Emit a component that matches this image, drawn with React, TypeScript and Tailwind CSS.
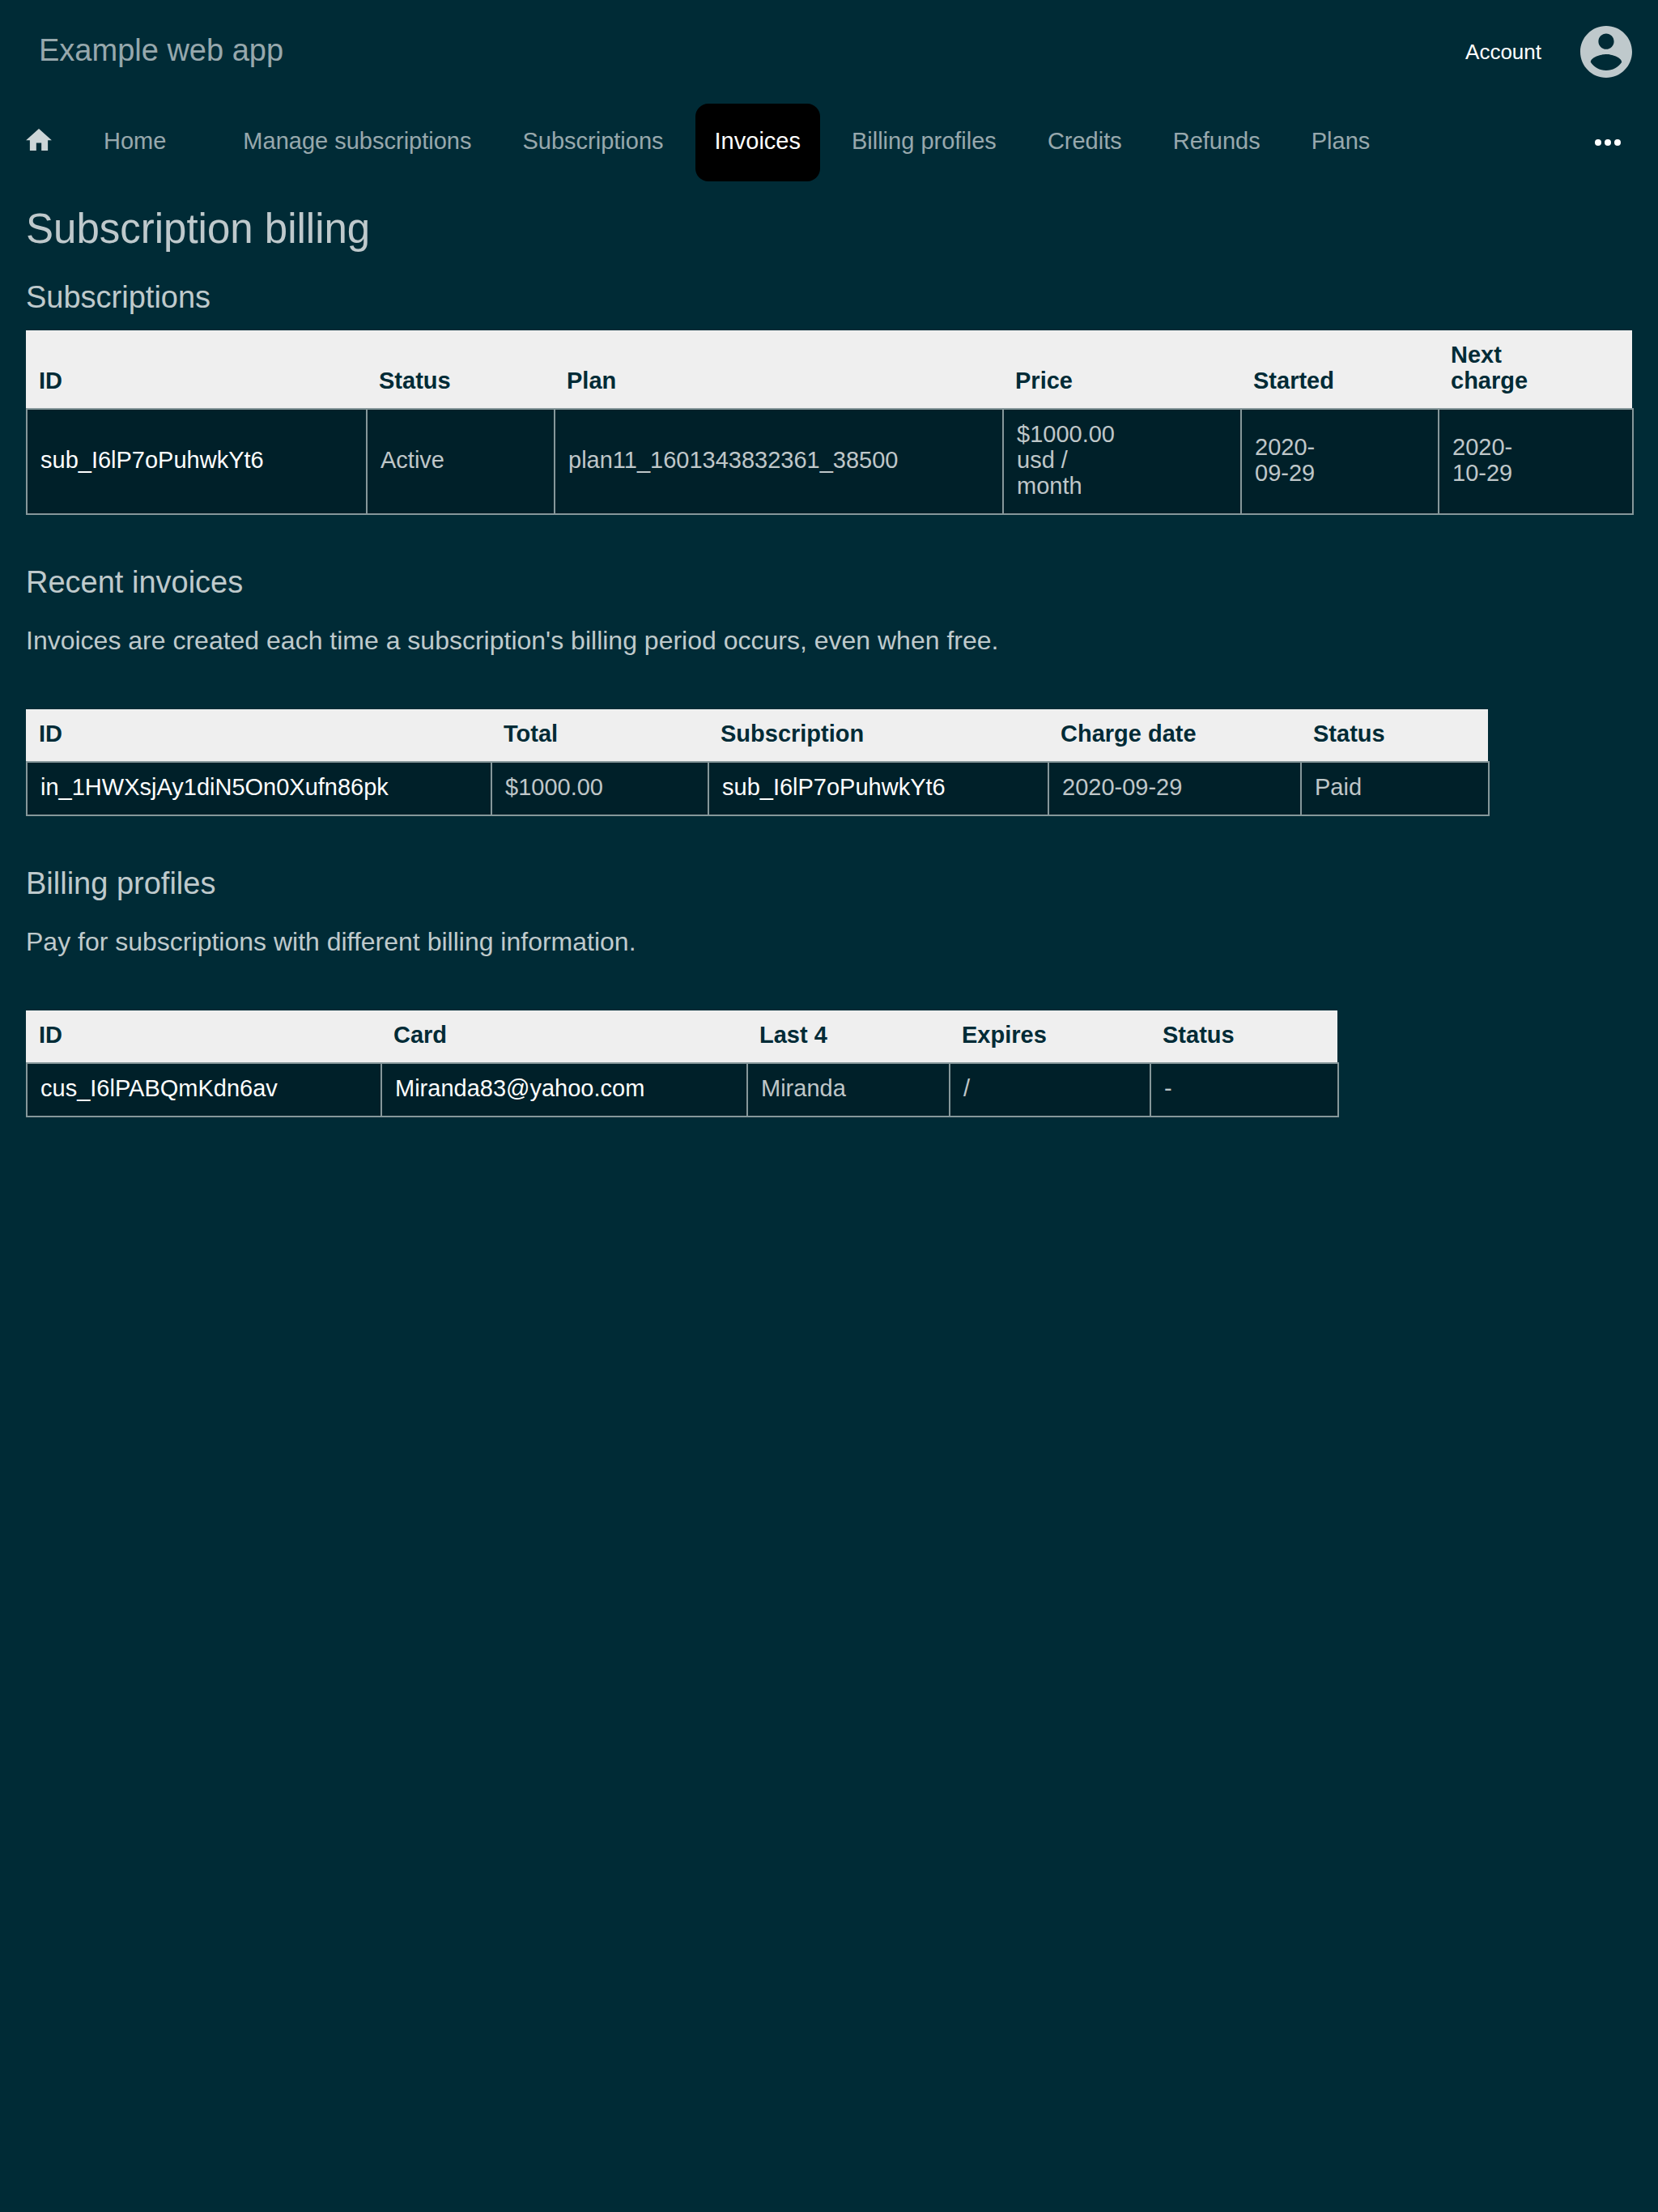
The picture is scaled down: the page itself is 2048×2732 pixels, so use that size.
import type { ReactNode } from "react";

const navItems = [
  "Manage subscriptions",
  "Subscriptions",
  "Invoices",
  "Billing profiles",
  "Credits",
  "Refunds",
  "Plans",
];

function HomeIcon() {
  return (
    <svg viewBox="2 3 20 17" className="h-[27px] w-8 fill-white/80" aria-hidden="true">
      <path d="M10 20v-6h4v6h5v-8h3L12 3 2 12h3v8z" />
    </svg>
  );
}

function AccountIcon() {
  return (
    <svg viewBox="2 2 20 20" className="size-16 fill-white/75" aria-hidden="true">
      <path d="M12 2C6.48 2 2 6.48 2 12s4.48 10 10 10 10-4.48 10-10S17.52 2 12 2zm0 3c1.66 0 3 1.34 3 3s-1.34 3-3 3-3-1.34-3-3 1.34-3 3-3zm0 14.2c-2.5 0-4.71-1.28-6-3.22.03-1.99 4-3.08 6-3.08 1.99 0 5.97 1.09 6 3.08-1.29 1.94-3.5 3.22-6 3.22z" />
    </svg>
  );
}

function MoreIcon() {
  return (
    <svg viewBox="4 10 16 4" className="h-2 w-8 fill-white" aria-hidden="true">
      <circle cx="6" cy="12" r="2" />
      <circle cx="12" cy="12" r="2" />
      <circle cx="18" cy="12" r="2" />
    </svg>
  );
}

function RecordLink({ children }: { children: ReactNode }) {
  return (
    <a href="#" className="text-white">
      {children}
    </a>
  );
}

type Column = { title: string; width: string };

function DataTable({
  label,
  columns,
  cells,
  full = false,
}: {
  label: string;
  columns: Column[];
  cells: ReactNode[];
  full?: boolean;
}) {
  return (
    <table
      aria-label={label}
      className={`border-separate border-spacing-0 text-left text-[29px] leading-8 ${
        full ? "w-full" : ""
      }`}
    >
      <thead>
        <tr className="text-[#002b36]">
          {columns.map((column) => (
            <th
              key={column.title}
              scope="col"
              className={`border-transparent bg-[#efefef] bg-clip-padding pt-[14px] pr-[125px] pb-[18px] pl-4 align-bottom font-bold last:border-r-2 ${column.width}`}
            >
              {column.title}
            </th>
          ))}
        </tr>
      </thead>
      <tbody>
        <tr>
          {cells.map((cell, index) => (
            <td
              key={index}
              className="border-y-2 border-l-2 border-[#86979a] bg-[#002029] pt-[14px] pr-[125px] pb-[18px] pl-4 align-middle last:border-r-2"
            >
              {cell}
            </td>
          ))}
        </tr>
      </tbody>
    </table>
  );
}

function SectionTitle({ children }: { children: ReactNode }) {
  return <h2 className="text-[38px] leading-[39px]">{children}</h2>;
}

export default function App() {
  return (
    <div className="min-h-screen bg-[#002b36] font-['Liberation_Sans',Arial,sans-serif] text-white/75">
      <header className="flex h-32 items-center justify-between px-8">
        <a href="#" className="pb-1 pl-4 text-[38px] leading-[39px] text-white/60">
          Example web app
        </a>
        <a href="#" className="flex items-center gap-12 text-[26px] leading-8 text-white">
          Account
          <AccountIcon />
        </a>
      </header>

      <nav className="flex h-24 items-center pr-[46px] pl-8 text-[29px] leading-8 text-white/60">
        <a href="#" aria-label="Dashboard" className="pb-2">
          <HomeIcon />
        </a>
        <a href="#" className="mr-[71px] ml-16 pb-1">
          Home
        </a>
        <div className="flex h-full gap-[15px]">
          {navItems.map((item) => (
            <a
              key={item}
              href="#"
              aria-current={item === "Invoices" ? "page" : undefined}
              className={`flex items-center rounded-2xl px-6 pb-1 ${
                item === "Invoices" ? "bg-black text-white" : ""
              }`}
            >
              {item}
            </a>
          ))}
        </div>
        <button type="button" aria-label="More" className="ml-auto py-4">
          <MoreIcon />
        </button>
      </nav>

      <main className="px-8 pt-[33px]">
        <h1 className="text-[51px] leading-[52px]">Subscription billing</h1>

        <section className="mt-[39px]">
          <SectionTitle>Subscriptions</SectionTitle>
          <div className="mt-[21px] -mr-0.5">
            <DataTable
              full
              label="Subscriptions"
              columns={[
                { title: "ID", width: "w-[420px]" },
                { title: "Status", width: "w-[232px]" },
                { title: "Plan", width: "w-[554px]" },
                { title: "Price", width: "w-[294px]" },
                { title: "Started", width: "w-[244px]" },
                { title: "Next charge", width: "w-[242px]" },
              ]}
              cells={[
                <RecordLink>sub_I6lP7oPuhwkYt6</RecordLink>,
                "Active",
                "plan11_1601343832361_38500",
                "$1000.00 usd / month",
                "2020-09-29",
                "2020-10-29",
              ]}
            />
          </div>
        </section>

        <section className="mt-16">
          <SectionTitle>Recent invoices</SectionTitle>
          <p className="mt-8 mb-[65px] text-[32px] leading-10">
            Invoices are created each time a subscription's billing period occurs, even when free.
          </p>
          <DataTable
            label="Recent invoices"
            columns={[
              { title: "ID", width: "w-[574px]" },
              { title: "Total", width: "w-[268px]" },
              { title: "Subscription", width: "w-[420px]" },
              { title: "Charge date", width: "w-[312px]" },
              { title: "Status", width: "w-[234px]" },
            ]}
            cells={[
              <RecordLink>in_1HWXsjAy1diN5On0Xufn86pk</RecordLink>,
              "$1000.00",
              <RecordLink>sub_I6lP7oPuhwkYt6</RecordLink>,
              "2020-09-29",
              "Paid",
            ]}
          />
        </section>

        <section className="mt-16">
          <SectionTitle>Billing profiles</SectionTitle>
          <p className="mt-8 mb-[65px] text-[32px] leading-10">
            Pay for subscriptions with different billing information.
          </p>
          <DataTable
            label="Billing profiles"
            columns={[
              { title: "ID", width: "w-[438px]" },
              { title: "Card", width: "w-[452px]" },
              { title: "Last 4", width: "w-[250px]" },
              { title: "Expires", width: "w-[248px]" },
              { title: "Status", width: "w-[234px]" },
            ]}
            cells={[
              <RecordLink>cus_I6lPABQmKdn6av</RecordLink>,
              <RecordLink>Miranda83@yahoo.com</RecordLink>,
              "Miranda",
              "/",
              "-",
            ]}
          />
        </section>
      </main>
    </div>
  );
}
